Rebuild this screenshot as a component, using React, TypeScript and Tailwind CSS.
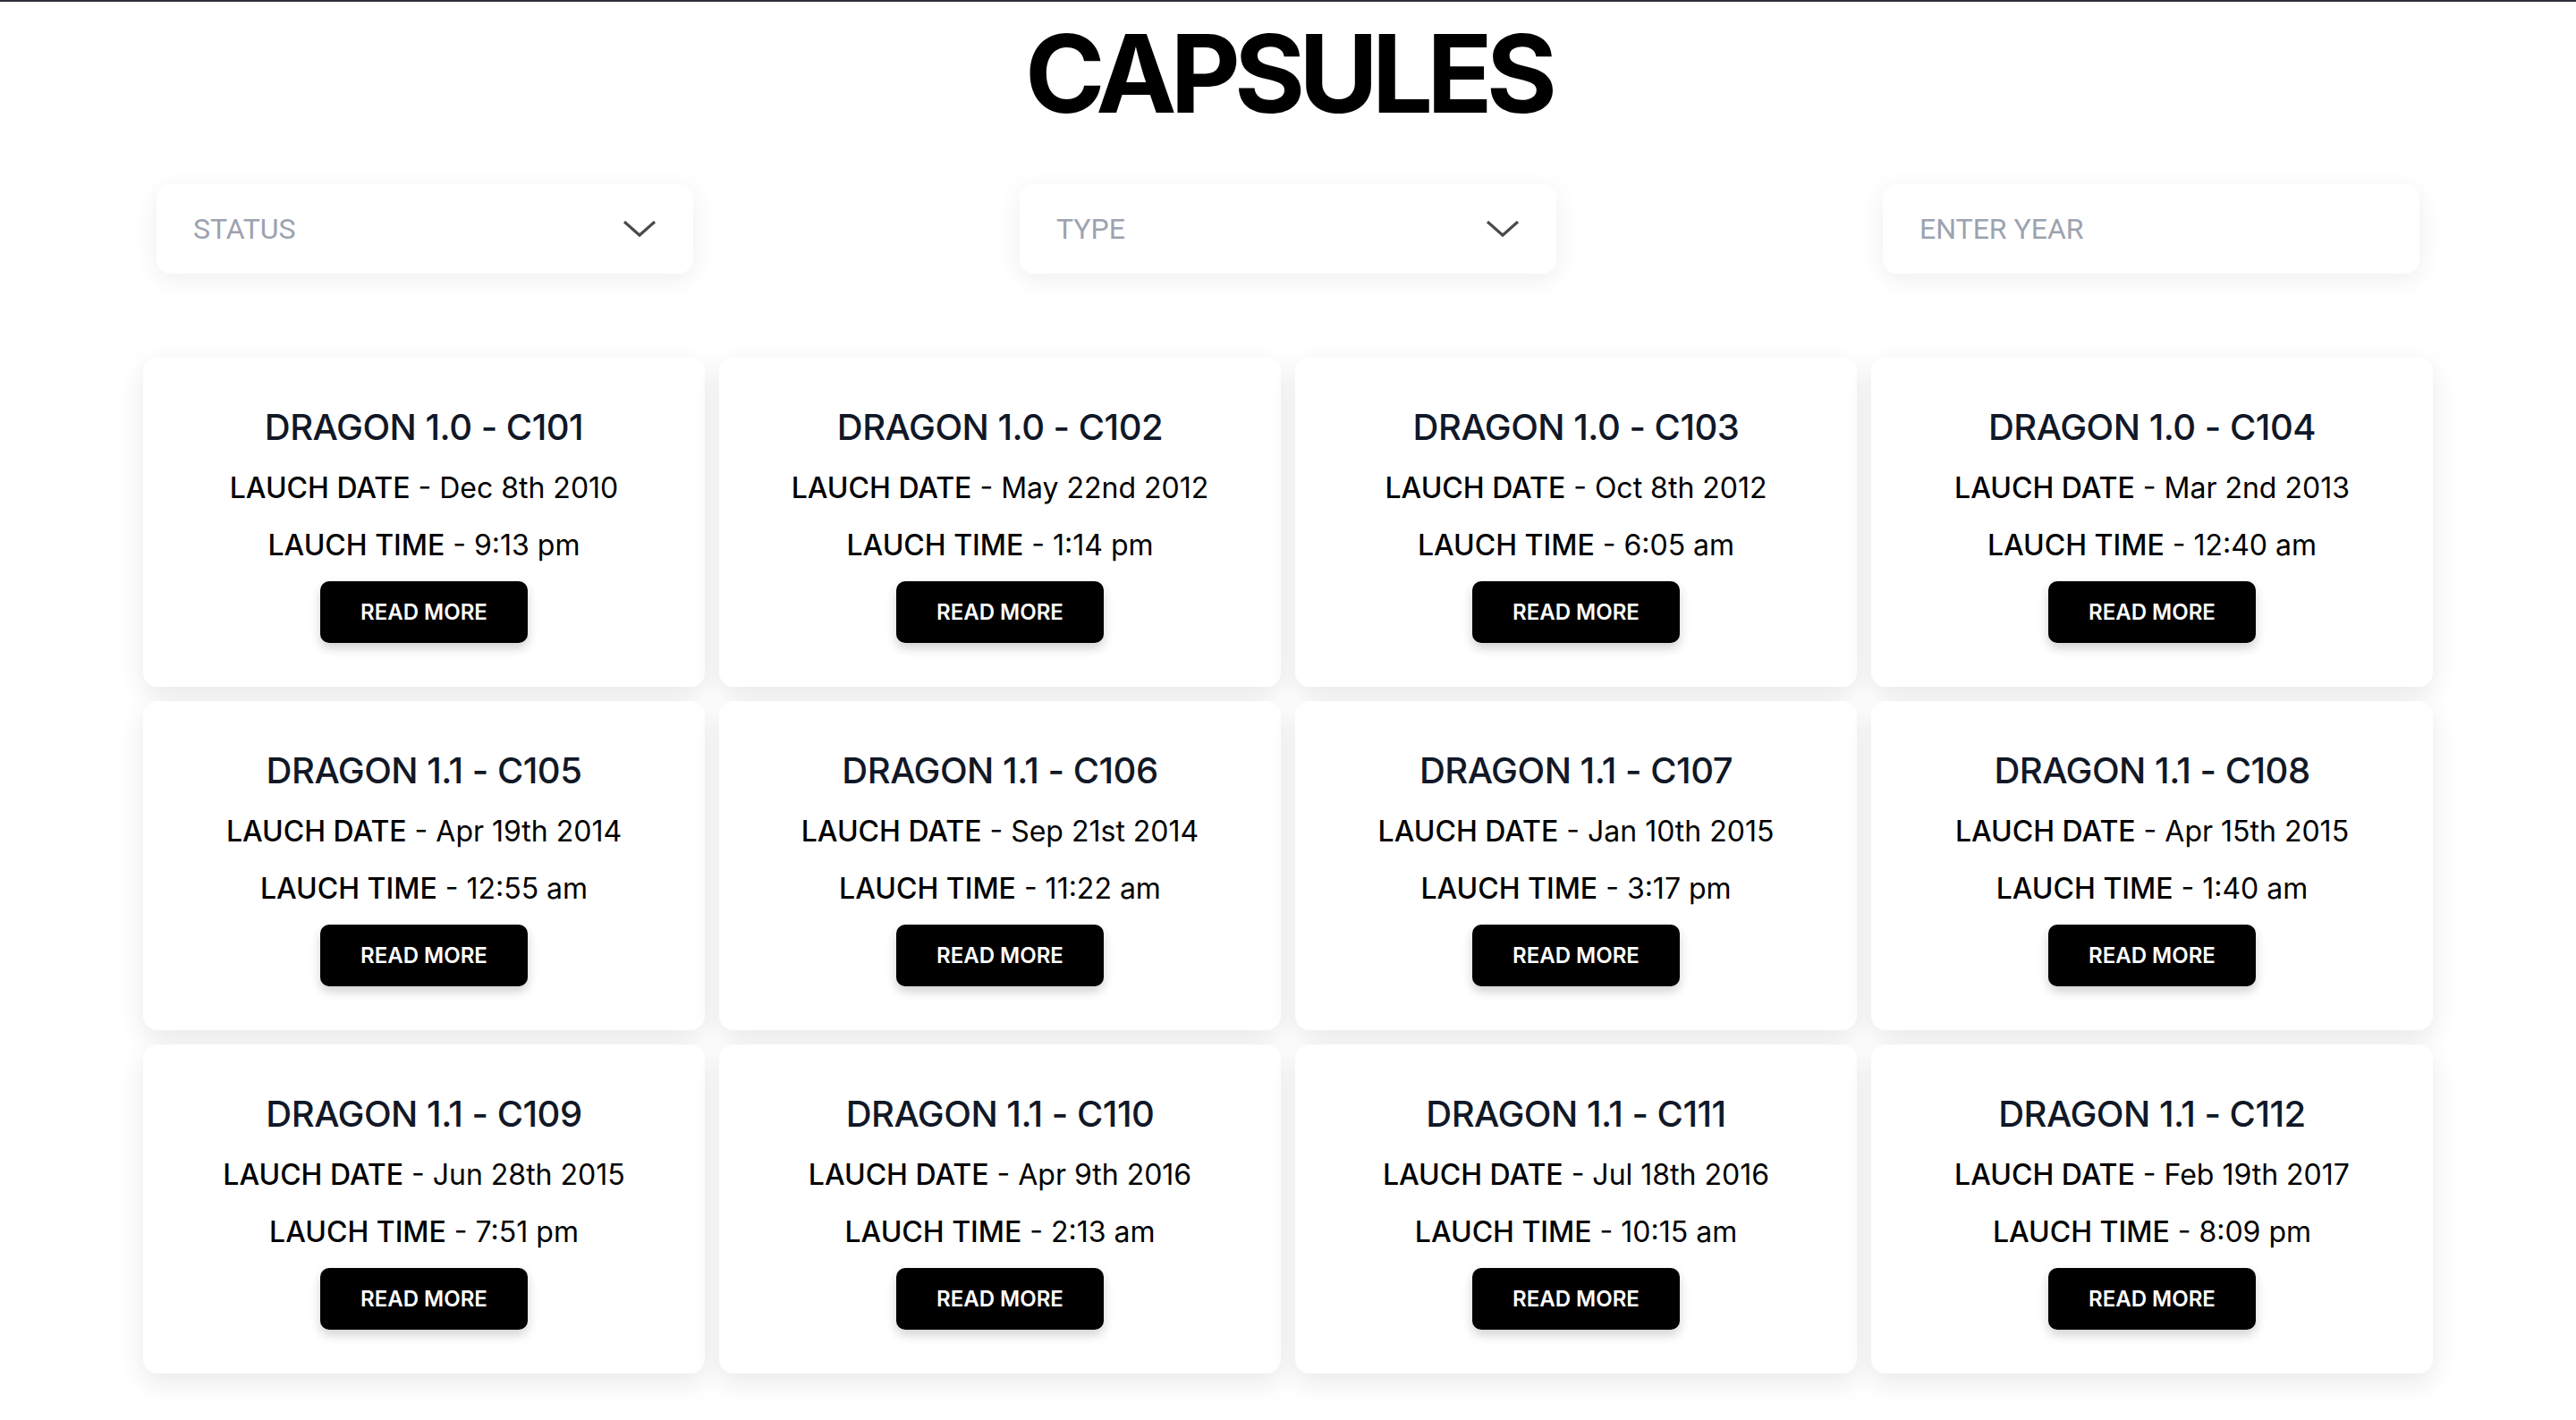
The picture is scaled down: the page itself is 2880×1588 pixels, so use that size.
import React from "react";

type Capsule = { name: string; date: string; time: string };

const capsules: Capsule[] = [
  { name: "DRAGON 1.0 - C101", date: "Dec 8th 2010", time: "9:13 pm" },
  { name: "DRAGON 1.0 - C102", date: "May 22nd 2012", time: "1:14 pm" },
  { name: "DRAGON 1.0 - C103", date: "Oct 8th 2012", time: "6:05 am" },
  { name: "DRAGON 1.0 - C104", date: "Mar 2nd 2013", time: "12:40 am" },
  { name: "DRAGON 1.1 - C105", date: "Apr 19th 2014", time: "12:55 am" },
  { name: "DRAGON 1.1 - C106", date: "Sep 21st 2014", time: "11:22 am" },
  { name: "DRAGON 1.1 - C107", date: "Jan 10th 2015", time: "3:17 pm" },
  { name: "DRAGON 1.1 - C108", date: "Apr 15th 2015", time: "1:40 am" },
  { name: "DRAGON 1.1 - C109", date: "Jun 28th 2015", time: "7:51 pm" },
  { name: "DRAGON 1.1 - C110", date: "Apr 9th 2016", time: "2:13 am" },
  { name: "DRAGON 1.1 - C111", date: "Jul 18th 2016", time: "10:15 am" },
  { name: "DRAGON 1.1 - C112", date: "Feb 19th 2017", time: "8:09 pm" },
];

function Chevron() {
  return (
    <svg width="38" height="20" viewBox="0 0 38 20" fill="none">
      <path d="M2 2 L19 17 L36 2" stroke="#4a4a4a" strokeWidth="3.2" />
    </svg>
  );
}

function Filter({ label, select }: { label: string; select?: boolean }) {
  return (
    <div className="w-[600px] h-[100px] rounded-2xl bg-white shadow-[0_6px_28px_rgba(0,0,0,0.07)] flex items-center justify-between pl-[41px] pr-[41px]">
      <span className="text-[32px] text-[#9ca3af] font-['Roboto',sans-serif]">{label}</span>
      {select && <Chevron />}
    </div>
  );
}

function Card({ c }: { c: Capsule }) {
  return (
    <div className="bg-white rounded-2xl shadow-[0_10px_30px_rgba(0,0,0,0.09)] h-[368px] flex flex-col items-center pt-[48px]">
      <h2 className="text-[40px] leading-[60px] font-medium text-[#111827] tracking-[-0.5px]">{c.name}</h2>
      <p className="mt-[14px] text-[32px] leading-[48px] text-black">
        <span className="font-medium">LAUCH DATE</span> - {c.date}
      </p>
      <p className="mt-[16px] text-[32px] leading-[48px] text-black">
        <span className="font-medium">LAUCH TIME</span> - {c.time}
      </p>
      <button className="mt-[16px] w-[232px] h-[69px] rounded-[10px] bg-black text-white text-[24px] font-semibold shadow-[0_6px_12px_rgba(0,0,0,0.18)]">
        READ MORE
      </button>
    </div>
  );
}

export default function App() {
  return (
    <div className="min-h-screen bg-white border-t-2 border-[#2d2f3b] font-['Inter',sans-serif] pb-[52px]">
      <h1 className="text-center text-[121px] leading-[130px] font-bold text-black tracking-[-7px] mt-[15px]">
        CAPSULES
      </h1>
      <div className="max-w-[2560px] mx-auto px-[15px] mt-[59px] flex justify-between">
        <Filter label="STATUS" select />
        <Filter label="TYPE" select />
        <Filter label="ENTER YEAR" />
      </div>
      <div className="max-w-[2560px] mx-auto mt-[94px] grid grid-cols-4 gap-4">
        {capsules.map((c) => (
          <Card key={c.name} c={c} />
        ))}
      </div>
    </div>
  );
}
